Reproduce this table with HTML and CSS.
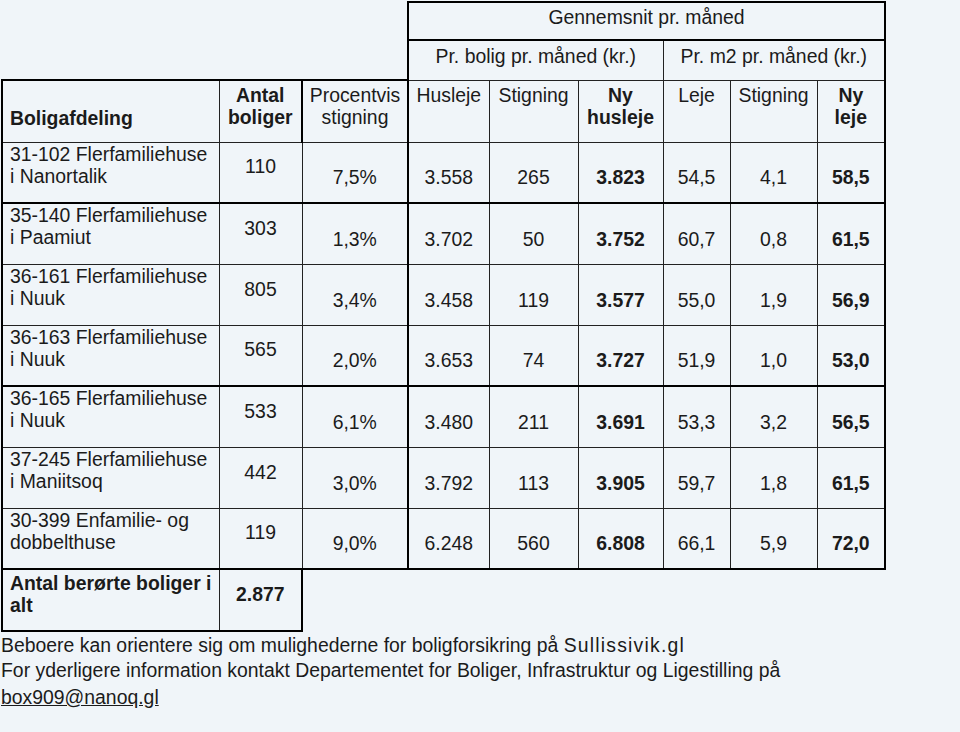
FILE: index.html
```html
<!DOCTYPE html>
<html lang="da">
<head>
<meta charset="utf-8">
<title>Huslejestigninger</title>
<link rel="stylesheet" href="styles.css">
</head>
<body>
<div class="page">
  <p class="lead">Oversigt over boligafdelinger og stigning i husleje pr. måned</p>
  <table class="rent">
    <colgroup>
      <col class="c1"><col class="c2"><col class="c3"><col class="c4"><col class="c5"><col class="c6"><col class="c7"><col class="c8"><col class="c9">
    </colgroup>
    <tr class="r-top">
      <td class="blank" colspan="3"></td>
      <td class="gen" colspan="6">Gennemsnit pr. måned</td>
    </tr>
    <tr class="r-grp">
      <td class="blank" colspan="3"></td>
      <td class="grp grp-l" colspan="3">Pr. bolig pr. måned (kr.)</td>
      <td class="grp grp-r" colspan="3">Pr. m2 pr. måned (kr.)</td>
    </tr>
    <tr class="r-head">
      <th class="h name-h">Boligafdeling</th>
      <th class="h top-thick thick-r">Antal boliger</th>
      <td class="h top-thick thick-r">Procentvis stigning</td>
      <td class="h">Husleje</td>
      <td class="h">Stigning</td>
      <th class="h">Ny husleje</th>
      <td class="h">Leje</td>
      <td class="h">Stigning</td>
      <th class="h last">Ny leje</th>
    </tr>
    <tr class="r-data">
      <td class="name">31-102 Flerfamiliehuse i Nanortalik</td><td class="count">110</td><td class="thick-r">7,5%</td>
      <td>3.558</td><td>265</td><td class="b">3.823</td><td>54,5</td><td>4,1</td><td class="b last">58,5</td>
    </tr>
    <tr class="r-data sep">
      <td class="name">35-140 Flerfamiliehuse i Paamiut</td><td class="count">303</td><td class="thick-r">1,3%</td>
      <td>3.702</td><td>50</td><td class="b">3.752</td><td>60,7</td><td>0,8</td><td class="b last">61,5</td>
    </tr>
    <tr class="r-data">
      <td class="name">36-161 Flerfamiliehuse i Nuuk</td><td class="count">805</td><td class="thick-r">3,4%</td>
      <td>3.458</td><td>119</td><td class="b">3.577</td><td>55,0</td><td>1,9</td><td class="b last">56,9</td>
    </tr>
    <tr class="r-data">
      <td class="name">36-163 Flerfamiliehuse i Nuuk</td><td class="count">565</td><td class="thick-r">2,0%</td>
      <td>3.653</td><td>74</td><td class="b">3.727</td><td>51,9</td><td>1,0</td><td class="b last">53,0</td>
    </tr>
    <tr class="r-data sep">
      <td class="name">36-165 Flerfamiliehuse i Nuuk</td><td class="count">533</td><td class="thick-r">6,1%</td>
      <td>3.480</td><td>211</td><td class="b">3.691</td><td>53,3</td><td>3,2</td><td class="b last">56,5</td>
    </tr>
    <tr class="r-data">
      <td class="name">37-245 Flerfamiliehuse i Maniitsoq</td><td class="count">442</td><td class="thick-r">3,0%</td>
      <td>3.792</td><td>113</td><td class="b">3.905</td><td>59,7</td><td>1,8</td><td class="b last">61,5</td>
    </tr>
    <tr class="r-data r-last">
      <td class="name">30-399 Enfamilie- og dobbelthuse</td><td class="count">119</td><td class="thick-r">9,0%</td>
      <td>6.248</td><td>560</td><td class="b">6.808</td><td>66,1</td><td>5,9</td><td class="b last">72,0</td>
    </tr>
    <tr class="r-total">
      <th class="name tot">Antal berørte boliger i alt</th>
      <th class="count tot tot-r">2.877</th>
      <td class="blank" colspan="7"></td>
    </tr>
  </table>
  <p class="note note-1">Beboere kan orientere sig om mulighederne for boligforsikring på <span class="site">Sullissivik.gl</span></p>
  <p class="note note-2">For yderligere information kontakt Departementet for Boliger, Infrastruktur og Ligestilling på</p>
  <p class="note note-3"><a class="mail" href="mailto:box909@nanoq.gl">box909@nanoq.gl</a></p>
</div>
</body>
</html>
```

FILE: styles.css
```css
html, body {
  margin: 0;
  background: #f0f5f9;
}

body {
  font-family: "Liberation Sans", Arial, Helvetica, sans-serif;
  font-size: 19.4px;
  line-height: 22px;
  color: #1b1b1b;
}

.page {
  padding-left: 1px;
}

.lead {
  margin: -22px 0 1px;
  font-weight: bold;
  white-space: nowrap;
}

.rent {
  border-collapse: collapse;
  table-layout: fixed;
  width: 885px;
}

.c1 { width: 217px; }
.c2 { width: 83px; }
.c3 { width: 106px; }
.c4 { width: 81px; }
.c5 { width: 89px; }
.c6 { width: 85px; }
.c7 { width: 67px; }
.c8 { width: 87px; }
.c9 { width: 68px; }

.rent td,
.rent th {
  padding: 2px 4px 14px;
  text-align: center;
  vertical-align: bottom;
  font-weight: normal;
  border: 1px solid #222;
}

.rent .blank {
  border: none;
  padding: 0;
}

/* header rows */
.r-top .gen {
  height: 38px;
  box-sizing: border-box;
  padding: 3px 4px 0;
  vertical-align: top;
  border: 2px solid #000;
}

.r-grp .grp {
  height: 40px;
  box-sizing: border-box;
  padding: 4px 4px 0;
  vertical-align: top;
  border-top: 2px solid #000;
}

.r-grp .grp-l { border-left: 2px solid #000; }
.r-grp .grp-r { border-right: 2px solid #000; }

.r-head {
  height: 62px;
}

.r-head .h {
  vertical-align: top;
  padding-top: 3px;
  padding-bottom: 13px;
}

.r-head th.h {
  font-weight: bold;
}

.r-head .name-h {
  text-align: left;
  vertical-align: bottom;
  padding-left: 7px;
  border-top: 2px solid #000;
  border-left: 2px solid #000;
}

.r-head .top-thick {
  border-top: 2px solid #000;
}

.rent .thick-r {
  border-right: 2px solid #000;
}

.rent .last {
  border-right: 2px solid #000;
}

/* data rows */
.r-data {
  height: 61px;
}

.r-data .name {
  text-align: left;
  vertical-align: top;
  padding: 0 9px 14px 7px;
  border-left: 2px solid #000;
}

.r-data .count,
.r-total .count {
  vertical-align: middle;
}

.rent .b {
  font-weight: bold;
}

.r-data.sep td {
  border-top: 2px solid #000;
}

.r-data.r-last td {
  border-bottom: 2px solid #000;
}

/* total row */
.r-total {
  height: 62px;
}

.r-total .tot {
  font-weight: bold;
  border-bottom: 2px solid #000;
}

.r-total .name {
  text-align: left;
  vertical-align: top;
  padding: 2px 2px 14px 7px;
  border-left: 2px solid #000;
}

.r-total .tot-r {
  border-right: 2px solid #000;
}

/* footer */
.note {
  margin: 0;
  line-height: 22px;
  white-space: nowrap;
}

.note-1 {
  margin-top: 2px;
}

.note-2 {
  margin-top: 3px;
}

.note-3 {
  margin-top: 5px;
}

.site {
  letter-spacing: 1.2px;
}

.mail {
  color: inherit;
  text-decoration: underline;
}
```
